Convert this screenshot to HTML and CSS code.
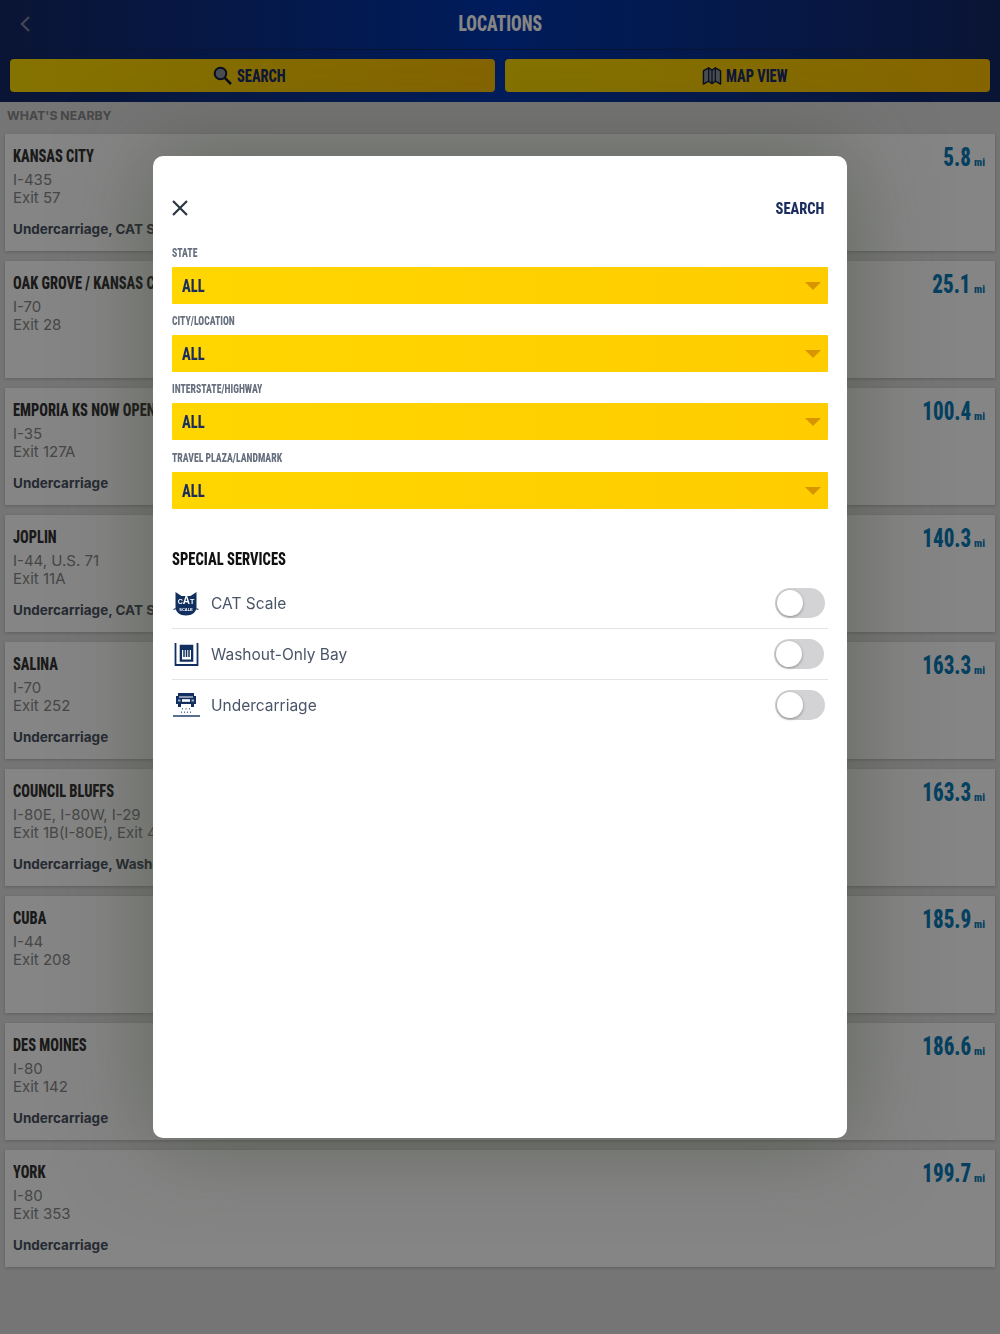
FILE: index.html
```html
<!DOCTYPE html>
<html lang="en">
<head>
  <meta charset="UTF-8">
  <title>Locations</title>
  <link rel="stylesheet" href="styles.css">
</head>
<body>

  <div class="header">
    <div class="title-row">
      <svg class="back" width="14" height="18" viewBox="0 0 14 18"><path d="M11 2L4 9l7 7" fill="none" stroke="#7d8597" stroke-width="2.4"/></svg>
      <h1><span>LOCATIONS</span></h1>
    </div>
    <div class="tabs">
      <a class="tab">
        <svg width="20" height="20" viewBox="0 0 20 20"><circle cx="7.5" cy="7.5" r="5.800" fill="#8f94a0" stroke="#101c3c" stroke-width="2"/><path d="M11.800 11.800l6.200 6.200" stroke="#101c3c" stroke-width="2.600"/></svg>
        <span class="short">SEARCH</span>
      </a>
      <a class="tab">
        <svg width="20" height="20" viewBox="0 0 21 20"><path d="M1.500 4.500L7 1.500l3.500 2.500L14 1.500l5.500 3v14L14 15.500 10.500 18 7 15.500l-5.500 3z" fill="#8f94a0" stroke="#101c3c" stroke-width="1.500" stroke-linejoin="round"/><path d="M7 1.500v14M10.500 4v14M14 1.500v14" stroke="#101c3c" stroke-width="1.300"/></svg>
        <span class="long">MAP VIEW</span>
      </a>
    </div>
  </div>

  <div class="nearby">WHAT'S NEARBY</div>

  <div class="list">
    <div class="card">
      <div class="info"><h3>KANSAS CITY</h3><p>I-435<br>Exit 57</p><p class="services">Undercarriage, CAT Scale</p></div>
      <div class="dist"><span>5.8</span><small>mi</small></div>
    </div>
    <div class="card">
      <div class="info"><h3>OAK GROVE / KANSAS CITY</h3><p>I-70<br>Exit 28</p></div>
      <div class="dist"><span>25.1</span><small>mi</small></div>
    </div>
    <div class="card">
      <div class="info"><h3>EMPORIA KS NOW OPEN</h3><p>I-35<br>Exit 127A</p><p class="services">Undercarriage</p></div>
      <div class="dist"><span>100.4</span><small>mi</small></div>
    </div>
    <div class="card">
      <div class="info"><h3>JOPLIN</h3><p>I-44, U.S. 71<br>Exit 11A</p><p class="services">Undercarriage, CAT Scale</p></div>
      <div class="dist"><span>140.3</span><small>mi</small></div>
    </div>
    <div class="card">
      <div class="info"><h3>SALINA</h3><p>I-70<br>Exit 252</p><p class="services">Undercarriage</p></div>
      <div class="dist"><span>163.3</span><small>mi</small></div>
    </div>
    <div class="card">
      <div class="info"><h3>COUNCIL BLUFFS</h3><p>I-80E, I-80W, I-29<br>Exit 1B(I-80E), Exit 4</p><p class="services">Undercarriage, Washout-Only Bay</p></div>
      <div class="dist"><span>163.3</span><small>mi</small></div>
    </div>
    <div class="card">
      <div class="info"><h3>CUBA</h3><p>I-44<br>Exit 208</p></div>
      <div class="dist"><span>185.9</span><small>mi</small></div>
    </div>
    <div class="card">
      <div class="info"><h3>DES MOINES</h3><p>I-80<br>Exit 142</p><p class="services">Undercarriage</p></div>
      <div class="dist"><span>186.6</span><small>mi</small></div>
    </div>
    <div class="card">
      <div class="info"><h3>YORK</h3><p>I-80<br>Exit 353</p><p class="services">Undercarriage</p></div>
      <div class="dist"><span>199.7</span><small>mi</small></div>
    </div>
  </div>

  <div class="overlay"></div>

  <div class="modal">
    <div class="modal-top">
      <svg width="16" height="16" viewBox="0 0 16 16"><path d="M1 1l14 14M15 1L1 15" stroke="#2b3442" stroke-width="2.200"/></svg>
      <span class="modal-search">SEARCH</span>
    </div>

    <label>STATE</label>
    <div class="select"><span>ALL</span><i></i></div>
    <label>CITY/LOCATION</label>
    <div class="select"><span>ALL</span><i></i></div>
    <label>INTERSTATE/HIGHWAY</label>
    <div class="select"><span>ALL</span><i></i></div>
    <label>TRAVEL PLAZA/LANDMARK</label>
    <div class="select"><span>ALL</span><i></i></div>

    <h2>SPECIAL SERVICES</h2>

    <div class="service">
      <svg width="30" height="30" viewBox="0 0 30 30">
        <path d="M3.500 4l6 4h9l6-4v15c0 5-4.500 8.500-10.500 8.500S3.500 24 3.500 19z" fill="#12305f"/>
        <path d="M1.500 21.500l4.500-1.500M26.500 21.500L22 20" stroke="#12305f" stroke-width="1.200"/>
        <text x="14" y="15.500" class="cat-text">C<tspan class="cat-a">A</tspan>T</text>
        <text x="14" y="23" class="scale-text">SCALE</text>
      </svg>
      <span>CAT Scale</span>
      <div class="toggle"><b></b></div>
    </div>
    <div class="service">
      <svg width="30" height="30" viewBox="0 0 30 30">
        <path d="M3.500 4v22h22V4" fill="none" stroke="#12305f" stroke-width="1.800"/>
        <path d="M8.500 6.500h12V22h-12z" fill="#12305f" stroke="#12305f" stroke-width="1.600"/>
        <path d="M10 11h9v9.500h-9z" fill="#fff"/>
        <path d="M12 11v7M14.500 11v7M17 11v7" stroke="#12305f" stroke-width="1.500"/>
      </svg>
      <span>Washout-Only Bay</span>
      <div class="toggle shifted"><b></b></div>
    </div>
    <div class="service">
      <svg width="30" height="30" viewBox="0 0 30 30">
        <path d="M6 3h16v3h2v8h-2v3h-3v-3H9v3H6v-3H4V6h2z" fill="#12305f"/>
        <path d="M7 7h14" stroke="#fff" stroke-width="1"/>
        <path d="M10 10.500h8" stroke="#fff" stroke-width="2.600"/>
        <path d="M6 10.500h2.500M19.500 10.500H22" stroke="#9fb0c8" stroke-width="2"/>
        <path d="M10.500 18v1.500M14 18v1.500M17.500 18v1.500M9.500 21.500V23M12.500 21.500V23M15.500 21.500V23M18.500 21.500V23" stroke="#5f779c" stroke-width="1.100"/>
        <path d="M1 26h27" stroke="#12305f" stroke-width="1.400"/>
      </svg>
      <span>Undercarriage</span>
      <div class="toggle"><b></b></div>
    </div>
  </div>

</body>
</html>
```

FILE: styles.css
```css
* {
  box-sizing: border-box;
}

body {
  margin: 0;
  height: 1334px;
  overflow: hidden;
  background-color: #e0e0e0;
  font-family: Inter, "Open Sans", sans-serif;
}

h1, h2, h3, p {
  margin: 0;
}

.header {
  height: 102px;
  background: linear-gradient(90deg, #152866, #0036b0 50%, #152866);
}

.title-row {
  height: 50px;
  padding-bottom: 2px;
  display: flex;
  align-items: center;
  justify-content: center;
  position: relative;
  border-bottom: 1px solid #14295f;
}

.back {
  position: absolute;
  left: 18px;
  top: 15px;
}

h1, h2, h3, .tab, .dist, .modal-search, label, .select {
  font-family: Roboto, sans-serif;
  font-stretch: 75%;
  font-weight: 800;
}

/* no condensed face narrow enough here, so squeeze the headings a bit more */
h1 span, .tab span, h2, h3, label, .select span, .dist span, .modal-search {
  display: inline-block;
  white-space: nowrap;
}

h1 {
  font-size: 22px;
  color: #fff;
}

h1 span {
  transform: scaleX(0.8);
}

.tabs {
  display: flex;
  gap: 10px;
  padding: 9px 10px 0;
}

.tab {
  flex: 1;
  height: 33px;
  border-radius: 4px;
  background: linear-gradient(90deg, #ffdc00, #ffd000 50%, #ffc000);
  display: flex;
  align-items: center;
  justify-content: center;
  gap: 4px;
  color: #1b2c6b;
  font-size: 18px;
}

.tab span {
  transform: scaleX(0.8);
  transform-origin: left;
}

.tab .short {
  margin-right: -5px;
}

.tab .long {
  margin-right: -9px;
}

.nearby {
  padding: 6px 7px 0;
  height: 32px;
  font-size: 12.300px;
  font-weight: 700;
  color: #8a8a8a;
}

.list {
  display: flex;
  flex-direction: column;
  gap: 10px;
  padding: 0 5px;
}

.card {
  height: 117px;
  background-color: #fff;
  box-shadow: 0 1px 3px rgba(0,0,0,0.2);
  padding: 11px 10px 0 8px;
  display: flex;
  justify-content: space-between;
  white-space: nowrap;
}

.info {
  width: 140px;
  overflow: hidden;
}

.card h3 {
  display: block;
  width: 180px;
  transform: scaleX(0.8);
  transform-origin: left;
  font-size: 18px;
  line-height: 22px;
  color: #333;
}

.card p {
  margin-top: 4px;
  font-size: 15px;
  line-height: 18px;
  color: #888;
}

.card .services {
  margin-top: 13px;
  font-size: 13.500px;
  font-weight: 700;
  color: #4a5260;
}

.dist {
  font-size: 25px;
  line-height: 26px;
  color: #0a7cb8;
}

.dist span {
  transform: scaleX(0.84);
  transform-origin: right;
}

.dist small {
  margin-left: 3px;
  font-size: 11px;
}

.overlay {
  position: fixed;
  inset: 0;
  background-color: rgba(0,0,0,0.48);
}

.modal {
  position: absolute;
  left: 153px;
  top: 156px;
  width: 694px;
  height: 982px;
  padding: 44px 19px 0;
  background-color: #fff;
  border-radius: 10px;
  box-shadow: 0 0 90px rgba(60,70,50,0.5);
}

.modal-top {
  display: flex;
  justify-content: space-between;
  align-items: center;
  height: 16px;
  margin-bottom: 30px;
}

.modal-search {
  margin-right: 4px;
  transform: scaleX(0.85);
  transform-origin: right;
  font-size: 17px;
  color: #1b2c5e;
}

label {
  display: block;
  height: 21px;
  transform: scaleX(0.81);
  transform-origin: left;
  font-size: 12px;
  line-height: 15px;
  color: #66707e;
}

.select {
  position: relative;
  height: 37px;
  margin-bottom: 10.200px;
  padding-left: 10px;
  line-height: 37px;
  border-radius: 1px;
  background: linear-gradient(90deg, #ffd600, #ffcc00);
  font-size: 18px;
  color: #1b2c5e;
}

.select span {
  transform: scaleX(0.81);
  transform-origin: left;
}

.select i {
  position: absolute;
  right: 7px;
  top: 15px;
  border-top: 8px solid #d99500;
  border-left: 8px solid transparent;
  border-right: 8px solid transparent;
}

h2 {
  display: block;
  margin-top: 39px;
  margin-bottom: 8px;
  transform: scaleX(0.81);
  transform-origin: left;
  font-size: 18px;
  line-height: 22px;
  color: #111;
}

.service {
  height: 51px;
  display: flex;
  align-items: center;
  gap: 9px;
  border-bottom: 1px solid #e4e4e4;
  font-size: 15.500px;
  color: #4a5568;
}

.service:last-child {
  border-bottom-color: transparent;
}

.service svg {
  flex: none;
}

.service span {
  padding-top: 2px;
}

.cat-text {
  font-family: "Liberation Sans", sans-serif;
  font-size: 7px;
  font-weight: 700;
  fill: #fff;
  text-anchor: middle;
}

.cat-a {
  font-size: 10px;
}

.scale-text {
  font-family: "Liberation Sans", sans-serif;
  font-size: 4px;
  font-weight: 700;
  fill: #fff;
  text-anchor: middle;
}

.toggle {
  margin-left: auto;
  margin-right: 3px;
  width: 50px;
  height: 30px;
  border-radius: 15px;
  background-color: #d3d3d6;
  padding: 2px;
}

.toggle.shifted {
  margin-right: 4px;
}

.toggle b {
  display: block;
  width: 26px;
  height: 26px;
  border-radius: 50%;
  background-color: #fff;
  box-shadow: 0 1px 3px rgba(0,0,0,0.35);
}
```
